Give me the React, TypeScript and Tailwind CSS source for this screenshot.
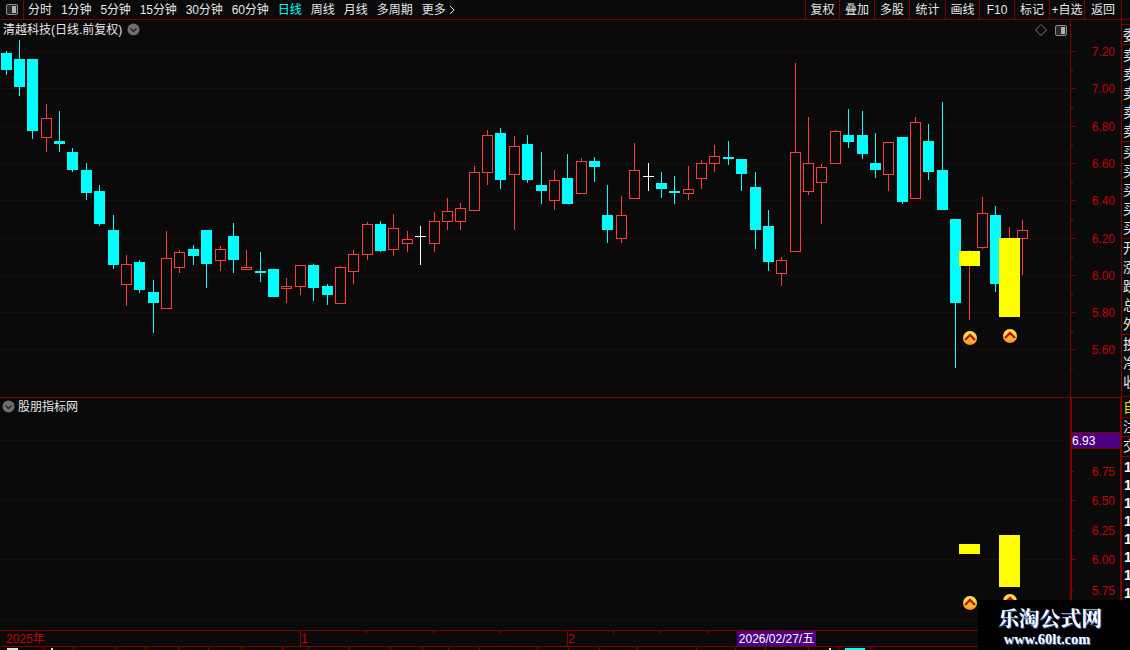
// left edge, body top, body bottom, wick high, wick low, kind: c cyan / r red / w doji
type Candle = [number, number, number, number, number, 'c' | 'r' | 'w']

const candles: Candle[] = [
  [1, 53, 70, 51, 75, 'c'], [14, 59, 87, 40, 96, 'c'], [27, 59, 131, 59, 139, 'c'], [41, 118, 138, 104, 152, 'r'],
  [54, 141, 144, 111, 152, 'c'], [67, 152, 170, 148, 172, 'c'], [81, 170, 193, 163, 200, 'c'], [94, 191, 224, 185, 226, 'c'],
  [108, 230, 265, 215, 269, 'c'], [121, 264, 285, 255, 306, 'r'], [134, 262, 290, 260, 293, 'c'], [148, 292, 303, 280, 333, 'c'],
  [161, 258, 309, 231, 309, 'r'], [174, 252, 268, 250, 273, 'r'], [188, 249, 256, 245, 265, 'c'], [201, 230, 264, 230, 288, 'c'],
  [215, 249, 261, 246, 271, 'r'], [228, 236, 260, 223, 273, 'c'], [241, 267, 270, 250, 270, 'r'], [255, 271, 273, 252, 282, 'c'],
  [268, 269, 297, 269, 297, 'c'], [281, 286, 289, 278, 303, 'r'], [295, 265, 287, 265, 295, 'r'], [308, 265, 288, 264, 301, 'c'],
  [322, 286, 295, 284, 305, 'c'], [335, 267, 304, 266, 304, 'r'], [348, 254, 272, 250, 284, 'r'], [362, 224, 255, 222, 260, 'r'],
  [375, 224, 251, 221, 252, 'c'], [388, 228, 250, 214, 256, 'r'], [402, 239, 244, 231, 252, 'r'], [415, 236, 237, 226, 265, 'w'],
  [429, 221, 244, 212, 252, 'r'], [442, 211, 222, 198, 230, 'r'], [455, 208, 222, 203, 230, 'r'], [469, 172, 211, 166, 211, 'r'],
  [482, 135, 173, 130, 185, 'r'], [495, 133, 180, 128, 189, 'c'], [509, 146, 175, 136, 230, 'r'], [522, 144, 180, 135, 183, 'c'],
  [536, 185, 191, 152, 204, 'c'], [549, 180, 201, 170, 210, 'r'], [562, 178, 204, 154, 204, 'c'], [576, 161, 194, 158, 194, 'r'],
  [589, 161, 167, 157, 182, 'c'], [602, 215, 230, 185, 243, 'c'], [616, 215, 239, 196, 243, 'r'], [629, 170, 199, 143, 199, 'r'],
  [643, 176, 177, 163, 191, 'w'], [656, 183, 189, 172, 198, 'c'], [669, 191, 193, 176, 204, 'c'], [683, 189, 194, 166, 200, 'r'],
  [696, 163, 179, 160, 189, 'r'], [709, 156, 164, 145, 172, 'r'], [723, 157, 159, 141, 165, 'c'], [736, 159, 174, 159, 191, 'c'],
  [750, 187, 230, 172, 249, 'c'], [763, 226, 262, 210, 271, 'c'], [776, 260, 274, 257, 286, 'r'], [790, 152, 252, 63, 252, 'r'],
  [803, 163, 192, 117, 195, 'r'], [816, 167, 183, 164, 224, 'r'], [830, 131, 164, 130, 164, 'r'], [843, 135, 142, 109, 148, 'c'],
  [857, 135, 154, 111, 159, 'c'], [870, 163, 170, 133, 178, 'c'], [883, 142, 175, 142, 191, 'r'], [897, 137, 202, 137, 204, 'c'],
  [910, 122, 199, 117, 199, 'r'], [923, 141, 172, 124, 180, 'c'], [937, 170, 210, 102, 210, 'c'], [950, 219, 303, 219, 368, 'c'],
  [964, 256, 262, 250, 320, 'r'], [977, 213, 248, 197, 249, 'r'], [990, 215, 284, 206, 292, 'c'], [1004, 240, 315, 227, 317, 'r'],
  [1017, 230, 239, 220, 275, 'r'],
]

const upperPrices: [string, number][] = [
  ['7.20', 51], ['7.00', 88], ['6.80', 126], ['6.60', 163], ['6.40', 200], ['6.20', 238], ['6.00', 275], ['5.80', 312], ['5.60', 349],
]
const lowerPrices: [string, number][] = [['6.75', 471], ['6.50', 500], ['6.25', 530], ['6.00', 559], ['5.75', 590]]

const periods: [string, string][] = [
  ['分时', ''], ['1分钟', 'tracking-[-0.1px]'], ['5分钟', 'tracking-[-0.1px]'], ['15分钟', 'tracking-[-0.1px]'],
  ['30分钟', 'tracking-[-0.1px]'], ['60分钟', 'tracking-[-0.1px]'], ['日线', 'text-[#00ffff]'], ['周线', ''], ['月线', ''], ['多周期', ''],
]
const actions: [string, string][] = [
  ['复权', 'w-[34px]'], ['叠加', 'w-[35px]'], ['多股', 'w-[35px]'], ['统计', 'w-[36px]'], ['画线', 'w-[34px]'],
  ['F10', 'w-[35px]'], ['标记', 'w-[35px]'], ['+自选', 'w-[35px]'], ['返回', 'w-[37px]'],
]

function PanelIcon() {
  return (
    <span className="flex h-[11px] w-[12px] rounded-[2px] border border-[#8a8a8a] bg-[#2a2a2a]">
      <span className="ml-auto mr-[1px] my-[1px] w-[4px] bg-[#b0b0b0]" />
    </span>
  )
}

function ChevronBadge() {
  return (
    <svg width="13" height="13" viewBox="0 0 13 13">
      <circle cx="6.5" cy="6.5" r="6" fill="#6e6e6e" />
      <path d="M3.5 5.5 L6.5 8.5 L9.5 5.5" fill="none" stroke="#222" strokeWidth="1.3" />
    </svg>
  )
}

function Coin({ x, y }: { x: number; y: number }) {
  return (
    <g>
      <circle cx={x} cy={y} r="7" fill="url(#coinFill)" />
      <path d={`M${x - 5} ${y + 2} L${x} ${y - 3} L${x + 5} ${y + 2}`} fill="none" stroke="#b81414" strokeWidth="2.4" />
    </g>
  )
}

function CoinGradient() {
  return (
    <defs>
      <linearGradient id="coinFill" x1="0" y1="0" x2="0" y2="1">
        <stop offset="0" stopColor="#ffe84a" />
        <stop offset="0.55" stopColor="#ffc83a" />
        <stop offset="1" stopColor="#ff8a1e" />
      </linearGradient>
    </defs>
  )
}

function GridLine({ y }: { y: number }) {
  return (
    <line x1="2" x2="1067" y1={y + 0.5} y2={y + 0.5} stroke="#580000" strokeDasharray="1 3" shapeRendering="crispEdges" />
  )
}

function CandleMark({ c }: { c: Candle }) {
  const [l, top, bottom, high, low, kind] = c
  if (kind === 'w') {
    return (
      <g fill="#ffffff" shapeRendering="crispEdges">
        <rect x={l + 5} y={high} width="1" height={low - high} />
        <rect x={l} y={top} width="11" height="1" />
      </g>
    )
  }
  const color = kind === 'c' ? '#00ffff' : '#ff3c3c'
  return (
    <g shapeRendering="crispEdges">
      <rect x={l + 5} y={high} width="1" height={low - high} fill={color} />
      {kind === 'c' ? (
        <rect x={l} y={top} width="11" height={bottom - top} fill={color} />
      ) : (
        <rect x={l + 0.5} y={top + 0.5} width="10" height={bottom - top - 1} fill="#0a0a0a" stroke={color} />
      )}
    </g>
  )
}

function AxisLabel({ text, y }: { text: string; y: number }) {
  return (
    <text x="1115" y={y + 5} textAnchor="end" fontSize="12" fill="#c40000">
      {text}
    </text>
  )
}

function StripRows({ chars, rowClass, textClass }: { chars: string; rowClass: string; textClass?: string }) {
  return (
    <div className="flex flex-col border-b border-[#800000]">
      {chars.split('').map((ch, i) => (
        <div key={i} className={`flex items-center pl-[1px] text-[14px] leading-none ${rowClass} ${textClass ?? 'text-[#e4e4e4]'}`}>
          {ch}
        </div>
      ))}
    </div>
  )
}

export default function App() {
  return (
    <div className="relative flex h-[650px] w-[1130px] flex-col overflow-hidden bg-[#0a0a0a] text-[12px] text-[#e6e6e6] [font-family:'Liberation_Sans','Noto_Sans_CJK_SC',sans-serif]">
      {/* top toolbar */}
      <div className="flex h-[20px] shrink-0 border-b border-[#800000]">
        <div className="flex w-[24px] items-center justify-center border-r border-[#800000] pb-[1px]">
          <PanelIcon />
        </div>
        <div className="ml-[4px] flex items-center gap-[9px]">
          {periods.map(([p, cls]) => (
            <span key={p} className={cls}>
              {p}
            </span>
          ))}
          <span className="flex items-center gap-[3px]">
            更多
            <svg width="6" height="10" viewBox="0 0 6 10">
              <path d="M1 1 L5 5 L1 9" fill="none" stroke="#e6e6e6" />
            </svg>
          </span>
        </div>
        <div className="ml-auto flex">
          {actions.map(([label, w]) => (
            <div key={label} className={`flex items-center justify-center border-l border-[#800000] ${w}`}>
              {label}
            </div>
          ))}
          <div className="w-[9px] border-l border-[#800000]" />
        </div>
      </div>

      <div className="flex h-[610px] shrink-0">
        <div className="flex w-[1122px] flex-col">
          {/* candlestick panel */}
          <div className="flex h-[378px] border-b border-[#800000]">
            <div className="relative h-[377px] w-[1070px]">
              <svg width="1070" height="377" viewBox="0 20 1070 377" className="block">
                <CoinGradient />
                {upperPrices.map(([t, y]) => (
                  <GridLine key={t} y={y} />
                ))}
                {candles.map((c) => (
                  <CandleMark key={c[0]} c={c} />
                ))}
                <g shapeRendering="crispEdges" fill="#ffff00">
                  <rect x="959" y="251" width="21" height="15" />
                  <rect x="999" y="238" width="21" height="79" />
                </g>
                <Coin x={970} y={338} />
                <Coin x={1010} y={336} />
              </svg>
              <div className="absolute left-[3px] top-[2px] flex h-[15px] items-center gap-[5px]">
                <span>清越科技(日线.前复权)</span>
                <ChevronBadge />
              </div>
              <div className="absolute right-[3px] top-[3px] flex items-center gap-[7px]">
                <svg width="14" height="14" viewBox="0 0 14 14">
                  <path d="M7 1.5 L12.5 7 L7 12.5 L1.5 7 Z" fill="none" stroke="#777" />
                </svg>
                <PanelIcon />
              </div>
            </div>
            <div className="w-[52px] border-x border-[#800000]">
              <svg width="50" height="377" viewBox="1071 20 50 377" className="block">
                {upperPrices.map(([t, y]) => (
                  <g key={t}>
                    <rect x="1071" y={y} width="5" height="1" fill="#800000" />
                    <rect x="1071" y={y + 19} width="2" height="1" fill="#800000" />
                    <AxisLabel text={t} y={y} />
                  </g>
                ))}
              </svg>
            </div>
          </div>

          {/* indicator panel */}
          <div className="flex h-[232px]">
            <div className="relative h-[232px] w-[1070px]">
              <svg width="1070" height="232" viewBox="0 398 1070 232" className="block">
                <GridLine y={440} />
                <GridLine y={500} />
                <GridLine y={559} />
                <GridLine y={619} />
                <g shapeRendering="crispEdges" fill="#ffff00">
                  <rect x="959" y="544" width="21" height="10" />
                  <rect x="999" y="535" width="21" height="52" />
                </g>
                <Coin x={970} y={603} />
                <Coin x={1010} y={601} />
              </svg>
              <div className="absolute left-[2px] top-[1px] flex h-[15px] items-center gap-[3px]">
                <ChevronBadge />
                <span>股朋指标网</span>
              </div>
            </div>
            <div className="w-[52px] border-x-2 border-[#800000]">
              <svg width="48" height="232" viewBox="1072 398 48 232" className="block">
                <rect x="1072" y="432" width="48" height="17" fill="#800000" />
                <rect x="1072" y="433" width="48" height="15" fill="#4b0082" />
                <text x="1072" y="445" fontSize="12" fill="#ffffff">
                  6.93
                </text>
                {lowerPrices.map(([t, y], i) => (
                  <g key={t}>
                    <rect x="1072" y={y} width={i % 2 ? 4 : 2} height="1" fill="#800000" />
                    <AxisLabel text={t} y={y} />
                  </g>
                ))}
              </svg>
            </div>
          </div>
        </div>

        {/* clipped quote column on the far right */}
        <div className="flex w-[8px] flex-col overflow-hidden whitespace-nowrap">
          <div className="h-[5px] shrink-0 border-b border-[#800000]" />
          <StripRows chars="委" rowClass="h-[19px]" />
          <StripRows chars="卖卖卖卖卖" rowClass="h-[19.2px]" />
          <StripRows chars="买买买买买" rowClass="h-[19.2px]" />
          <StripRows chars="开涨跌总外" rowClass="h-[19px]" />
          <div className="flex h-[62px] shrink-0 flex-col border-b border-[#800000]">
            {'换净收'.split('').map((ch) => (
              <div key={ch} className="flex h-[19px] items-center pl-[1px] text-[14px] leading-none text-[#e4e4e4]">
                {ch}
              </div>
            ))}
          </div>
          <StripRows chars="自" rowClass="h-[20px]" textClass="text-[#e0e000]" />
          <StripRows chars="注" rowClass="h-[18px]" />
          <StripRows chars="交" rowClass="h-[19px]" />
          <div className="mt-[1px] flex flex-col">
            {[0, 1, 2, 3, 4, 5, 6, 7, 8].map((i) => (
              <div key={i} className="flex h-[18px] shrink-0 items-center pl-[2px] text-[14px] font-bold leading-none text-white">
                1
              </div>
            ))}
          </div>
        </div>
      </div>

      {/* date axis */}
      <div className="relative flex h-[17px] shrink-0 border-y border-[#800000] text-[#c40000]">
        <div className="flex w-[300px] items-center pl-[6px]">2025年</div>
        <div className="flex w-[267px] items-center border-l border-[#800000]">1</div>
        <div className="flex w-[170px] items-center border-l border-[#800000]">2</div>
        <div className="flex w-[79px] items-center justify-center whitespace-nowrap bg-[#4b0082] text-white">2026/02/27/五</div>
        <svg width="800" height="4" viewBox="0 0 800 4" className="absolute left-0 top-0">
          {[366, 433, 499, 613, 660, 707].map((x) => (
            <rect key={x} x={x} y="0" width="1" height="3" fill="#800000" />
          ))}
        </svg>
      </div>

      {/* sliver of the tab row under the axis */}
      <svg width="1130" height="3" viewBox="0 0 1130 3" className="block shrink-0">
        {[43, 73, 115, 145, 178, 208, 241, 282, 308, 349, 390, 422, 448, 479, 537, 568, 599, 637, 696, 735, 765, 808, 838, 870].map((x) => (
          <rect key={x} x={x} y="0" width="1" height="3" fill="#800000" />
        ))}
        <rect x="7" y="1" width="11" height="2" fill="#e0e0e0" />
        <rect x="51" y="1" width="2" height="2" fill="#e0e0e0" />
        <rect x="829" y="1" width="2" height="2" fill="#e0e0e0" />
        <rect x="845" y="1" width="20" height="2" fill="#00ffff" />
      </svg>

      {/* site watermark */}
      <div className="absolute bottom-0 right-0 flex h-[50px] w-[152px] flex-col items-center bg-black pr-[8px] pt-[7px] font-bold text-white [font-family:'Liberation_Serif','Noto_Serif_CJK_SC','Noto_Sans_CJK_SC',serif]">
        <span className="text-[20.8px] leading-[24px] [text-shadow:1px_1px_0_#3a6cc8]">乐淘公式网</span>
        <span className="mr-[6px] text-[14.4px] leading-[16px] [text-shadow:1px_1px_0_#3a6cc8]">www.60lt.com</span>
      </div>
    </div>
  )
}
